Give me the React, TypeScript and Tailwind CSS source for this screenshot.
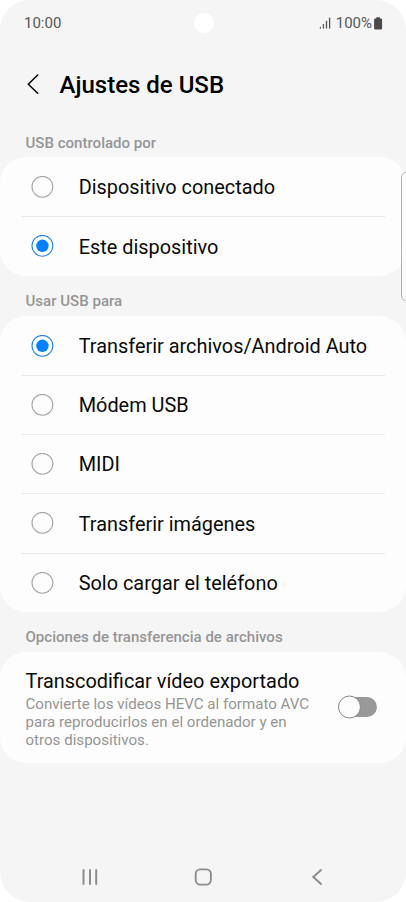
import React, { useState } from "react";

interface Option {
  id: string;
  label: string;
}

const controlOptions: Option[] = [
  { id: "connected", label: "Dispositivo conectado" },
  { id: "this", label: "Este dispositivo" },
];

const usageOptions: Option[] = [
  { id: "files", label: "Transferir archivos/Android Auto" },
  { id: "modem", label: "Módem USB" },
  { id: "midi", label: "MIDI" },
  { id: "images", label: "Transferir imágenes" },
  { id: "charge", label: "Solo cargar el teléfono" },
];

const StatusBar: React.FC = () => (
  <div className="relative flex h-[46px] shrink-0 items-center justify-between pl-6 pr-[23px] text-[15px] text-[#555555]">
    <span>10:00</span>
    <span className="absolute left-[193.5px] top-[12.5px] size-[20.5px] rounded-full bg-white" />
    <div className="flex items-center">
      <svg className="mr-[5px]" width="12" height="12" viewBox="0 0 12 12" aria-hidden="true">
        <g stroke="#555555" strokeWidth="1.3" strokeLinecap="round">
          <path d="M1.4 10.4v.6" />
          <path d="M4.4 7.6v3.4" />
          <path d="M7.5 4.4v6.6" />
          <path d="M10.6 1.2v9.8" />
        </g>
      </svg>
      <span>100%</span>
      <svg className="ml-[2px]" width="9" height="13" viewBox="0 0 9 13" aria-hidden="true">
        <path
          d="M2.2 1.5V.8q0-.5.5-.5h2.8q.5 0 .5.5v.7h.9q1.2 0 1.2 1.2v8.6q0 1.2-1.2 1.2H1.3q-1.2 0-1.2-1.2V2.7q0-1.2 1.2-1.2z"
          fill="#4a4a4a"
        />
      </svg>
    </div>
  </div>
);

interface RadioGroupProps {
  title: string;
  options: Option[];
  value: string;
  onChange: (id: string) => void;
}

const SectionTitle: React.FC<{ children: string }> = ({ children }) => (
  <h2 className="h-10 pl-[25.5px] pt-[15.5px] text-[15.05px] font-medium leading-5 text-[#959595]">{children}</h2>
);

const RadioGroup: React.FC<RadioGroupProps> = ({ title, options, value, onChange }) => (
  <section>
    <SectionTitle>{title}</SectionTitle>
    <div role="radiogroup" aria-label={title} className="rounded-[26px] bg-[#fdfdfd] px-[21px]">
      {options.map((option) => {
        const selected = option.id === value;
        return (
          <button
            key={option.id}
            role="radio"
            aria-checked={selected}
            onClick={() => onChange(option.id)}
            className="flex h-[59.28px] w-full items-center border-t border-[#e9e9e9] pl-[10px] text-left text-[19.9px] text-[#0a0a0a] first:border-transparent"
          >
            <svg className="mr-[24.7px] shrink-0" width="23" height="22" viewBox="0 0 23 22" aria-hidden="true">
              <circle
                cx="11.4"
                cy="10.8"
                r="10.4"
                fill="none"
                stroke={selected ? "#2684e8" : "#a5a5a5"}
                strokeWidth="1.1"
              />
              {selected && <circle cx="11.4" cy="10.8" r="6.2" fill="#0381fe" />}
            </svg>
            <span className="pt-[2.2px]">{option.label}</span>
          </button>
        );
      })}
    </div>
  </section>
);

const NavBar: React.FC = () => (
  <nav className="mt-auto flex h-[50px] items-center justify-between pl-[80px] pr-[79px]">
    <svg width="20" height="20" viewBox="0 0 20 20" fill="none" stroke="#8c8c8c" strokeWidth="2" strokeLinecap="round">
      <path d="M3.5 3v14M10 3v14M16.2 3v14" />
    </svg>
    <svg width="20" height="20" viewBox="0 0 20 20" fill="none" stroke="#8c8c8c" strokeWidth="1.9">
      <rect x="1.7" y="2.4" width="15.2" height="15.2" rx="4.6" />
    </svg>
    <svg width="20" height="20" viewBox="0 0 20 20" fill="none" stroke="#8c8c8c" strokeWidth="2" strokeLinecap="round">
      <path d="M14 3 6.3 10 14 17" />
    </svg>
  </nav>
);

const App: React.FC = () => {
  const [control, setControl] = useState("this");
  const [usage, setUsage] = useState("files");
  const [transcode, setTranscode] = useState(false);

  return (
    <div className="h-[902px] w-[406px] overflow-hidden bg-white font-[Roboto,sans-serif]">
      <main className="relative flex h-full flex-col overflow-hidden rounded-[30px] bg-[#f5f5f5]">
        <StatusBar />

        <header className="flex h-[71px] items-center pl-[27px] pt-[6px]">
          <svg
            className="mr-[19.5px]"
            width="13"
            height="22"
            viewBox="0 0 13 22"
            fill="none"
            stroke="#0a0a0a"
            strokeWidth="1.6"
            strokeLinecap="round"
            strokeLinejoin="round"
          >
            <path d="M10.7 1 1.3 10.2l9.4 9.1" />
          </svg>
          <h1 className="text-[24px] font-medium leading-8 text-black">Ajustes de USB</h1>
        </header>

        <RadioGroup title="USB controlado por" options={controlOptions} value={control} onChange={setControl} />
        <RadioGroup title="Usar USB para" options={usageOptions} value={usage} onChange={setUsage} />

        <section>
          <SectionTitle>Opciones de transferencia de archivos</SectionTitle>
          <div className="flex h-[111px] items-center rounded-[26px] bg-[#fdfdfd] pl-[25.5px] pr-[28px]">
            <div className="flex-1 pt-1">
              <h3 className="mb-px text-[19.9px] leading-[26px] text-[#0a0a0a]">Transcodificar vídeo exportado</h3>
              <p className="w-[300px] text-[15.1px] leading-[17.8px] text-[#959595]">
                Convierte los vídeos HEVC al formato AVC
                <br />
                para reproducirlos en el ordenador y en
                <br />
                otros dispositivos.
              </p>
            </div>
            <button
              role="switch"
              aria-checked={transcode}
              aria-label="Transcodificar vídeo exportado"
              onClick={() => setTranscode(!transcode)}
            >
              <svg width="40" height="24" viewBox="0 0 40 24">
                <rect x="5" y="2" width="34" height="20" rx="10" fill={transcode ? "#0381fe" : "#989898"} />
                <circle cx={transcode ? 28 : 11.5} cy="12" r="11" fill="#fdfdfd" stroke="#858585" strokeWidth="1" />
              </svg>
            </button>
          </div>
        </section>

        <NavBar />

        {/* edge panel handle, runs off the right side */}
        <div className="absolute -right-2 top-[172px] h-[129px] w-[13px] rounded-[5px] border border-[#b4b4b4] bg-white/50" />
      </main>
    </div>
  );
};

export default App;
